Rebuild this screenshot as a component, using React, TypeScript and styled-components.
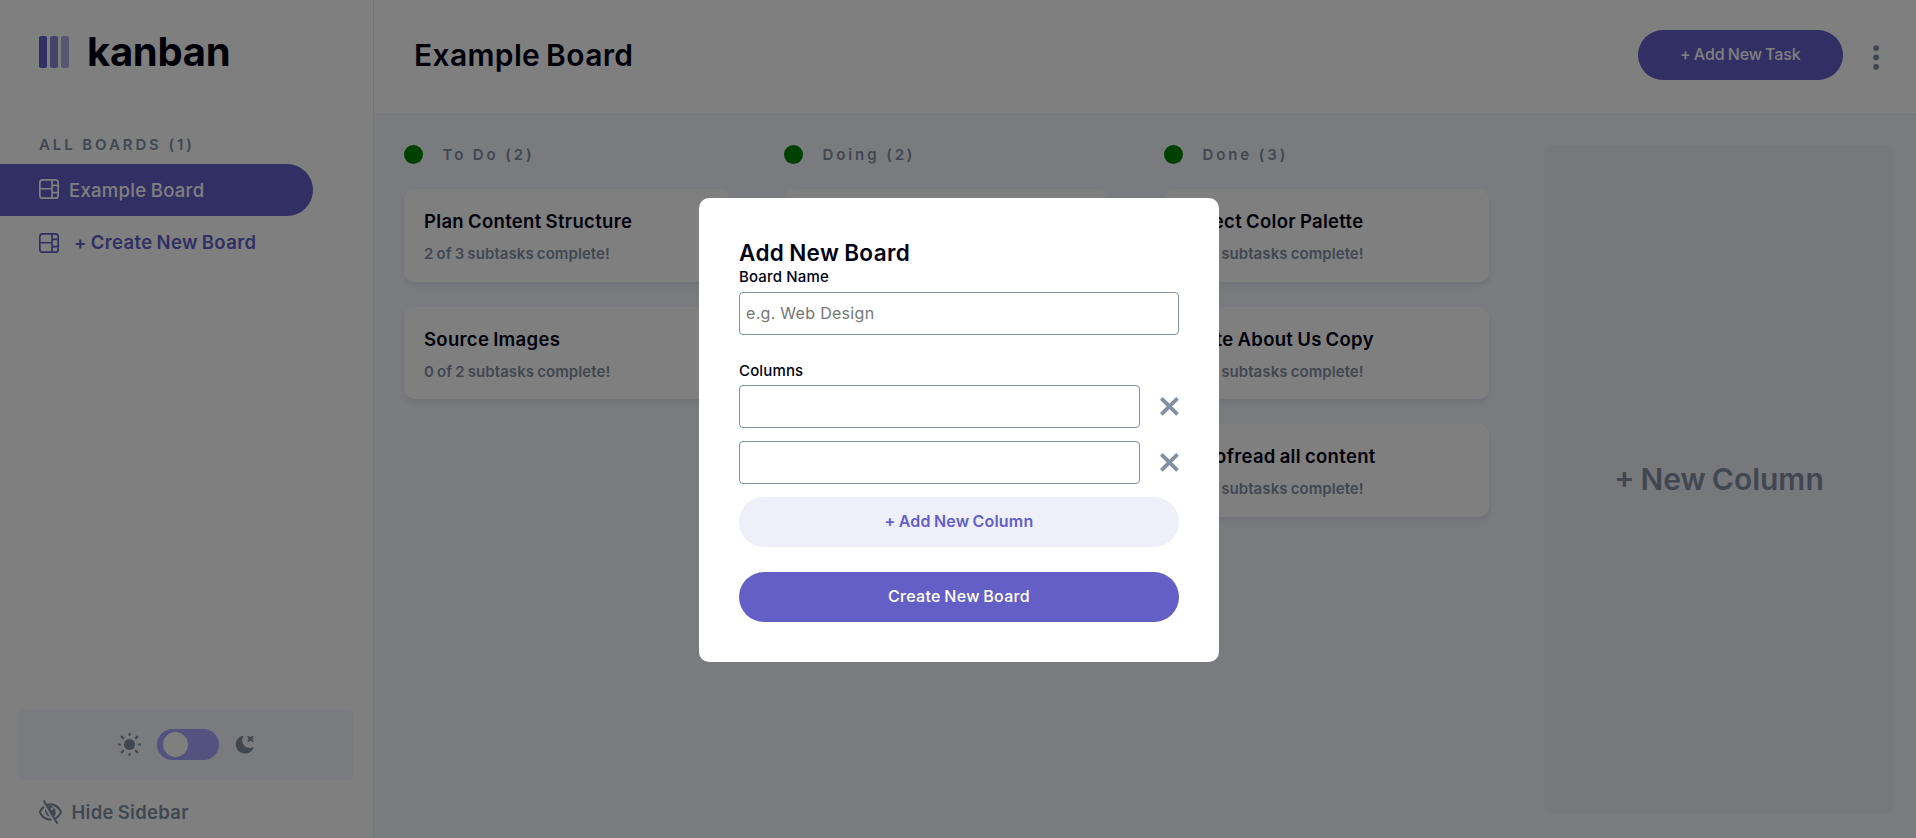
import React from 'react';
import styled, { createGlobalStyle } from 'styled-components';

const colors = {
  purple: '#635fc7',
  purpleLight: '#a8a4ff',
  grey: '#828fa3',
  line: '#e4ebfa',
  surface: '#f4f7fd',
  ink: '#000112',
};

const GlobalStyle = createGlobalStyle`
  *, *::before, *::after { box-sizing: border-box; }
  body {
    margin: 0;
    overflow: hidden;
    font-family: Inter, "Liberation Sans", sans-serif;
    color: ${colors.ink};
  }
  h1, h2, h3, p { margin: 0; }
  button, input { font-family: inherit; }
  button { border: 0; padding: 0; cursor: pointer; background: none; }
  svg { display: block; flex: none; }
`;

const Page = styled.div`
  display: flex;
  height: 100vh;
  background: ${colors.surface};
`;

/* Sidebar */

const Sidebar = styled.aside`
  display: flex;
  flex-direction: column;
  flex: none;
  width: 374px;
  padding: 36px 0 10px;
  background: #fff;
  border-right: 1px solid ${colors.line};
`;

const Logo = styled.div`
  display: flex;
  gap: 18px;
  height: 32px;
  margin-left: 39px;
  font-size: 40px;
  font-weight: 700;
  line-height: 32px;
  letter-spacing: -0.3px;
`;

const LogoBars = styled.div`
  display: flex;
  gap: 3px;
`;

const LogoBar = styled.span<{ $opacity: number }>`
  width: 8px;
  height: 32px;
  border-radius: 2px;
  background: ${colors.purple};
  opacity: ${(p) => p.$opacity};
`;

const BoardsHeading = styled.h3`
  margin: 66px 0 9px 39px;
  font-size: 15px;
  font-weight: 600;
  line-height: 21px;
  letter-spacing: 2.9px;
  color: ${colors.grey};
`;

const BoardLink = styled.button<{ $active?: boolean }>`
  display: flex;
  align-items: center;
  gap: ${(p) => (p.$active ? 10 : 15)}px;
  width: 337px;
  height: 52px;
  margin-left: -24px;
  padding-left: 63px;
  border-radius: 26px;
  background: ${(p) => (p.$active ? colors.purple : 'transparent')};
  color: ${(p) => (p.$active ? '#fff' : colors.purple)};
  font-size: 18.5px;
  font-weight: ${(p) => (p.$active ? 500 : 600)};
  letter-spacing: ${(p) => (p.$active ? 0.3 : 0.35)}px;
  word-spacing: -1px;

  svg {
    margin-top: ${(p) => (p.$active ? 0 : 2)}px;
    margin-bottom: ${(p) => (p.$active ? 2 : 0)}px;
  }
`;

const ThemePanel = styled.div`
  display: flex;
  align-items: center;
  justify-content: center;
  gap: 16px;
  height: 71px;
  margin: auto 20px 16px 19px;
  border-radius: 5px;
  background: ${colors.surface};
  color: ${colors.grey};
`;

const Toggle = styled.button`
  display: flex;
  align-items: center;
  width: 62px;
  height: 31px;
  padding-left: 6px;
  border-radius: 16px;
  background: ${colors.purpleLight};
`;

const Knob = styled.span`
  width: 25px;
  height: 25px;
  border-radius: 50%;
  background: #fff;
`;

const HideButton = styled.button`
  display: flex;
  align-items: center;
  gap: 9.5px;
  height: 32px;
  margin-left: 39px;
  font-size: 18.5px;
  font-weight: 600;
  letter-spacing: 0.3px;
  word-spacing: -1px;
  color: ${colors.grey};
`;

/* Main area */

const Main = styled.main`
  display: flex;
  flex-direction: column;
  flex: 1;
  min-width: 0;
`;

const Header = styled.header`
  display: flex;
  align-items: flex-start;
  height: 115px;
  padding: 30px 37px 0 40px;
  background: #fff;
  border-bottom: 1px solid ${colors.line};
`;

const BoardTitle = styled.h1`
  flex: 1;
  font-size: 30px;
  font-weight: 600;
  line-height: 50px;
  letter-spacing: 0.35px;
  word-spacing: -2px;
`;

const Pill = styled.button<{ $secondary?: boolean }>`
  height: 50px;
  padding-bottom: 2px;
  border-radius: 25px;
  font-size: 16px;
  font-weight: ${(p) => (p.$secondary ? 600 : 500)};
  letter-spacing: ${(p) => (p.$secondary ? 0.2 : 0)}px;
  word-spacing: -1px;
  background: ${(p) => (p.$secondary ? '#efeff9' : colors.purple)};
  color: ${(p) => (p.$secondary ? colors.purple : '#fff')};
`;

const AddTaskButton = styled(Pill)`
  width: 205px;
  margin-right: 30px;
  letter-spacing: -0.1px;
`;

const MenuButton = styled.button`
  margin-top: 15px;
  color: ${colors.grey};
`;

const Columns = styled.div`
  display: flex;
  flex: 1;
  gap: 55px;
  padding: 30px 22px 25px 30px;
`;

const Column = styled.section`
  display: flex;
  flex-direction: column;
  gap: 25px;
  flex: none;
  width: 325px;
`;

const ColumnHeading = styled.h3`
  display: flex;
  align-items: center;
  gap: 19.5px;
  height: 19px;
  font-size: 15px;
  font-weight: 600;
  letter-spacing: 2.9px;
  color: ${colors.grey};
`;

const Dot = styled.span`
  width: 19px;
  height: 19px;
  border-radius: 50%;
  background: green;
`;

const Card = styled.article`
  height: 92.5px;
  padding: 20px;
  border-radius: 10px;
  background: #fff;
  box-shadow: 0 4px 6px rgba(54, 78, 126, 0.1);
`;

const CardTitle = styled.h2`
  font-size: 18.5px;
  font-weight: 600;
  line-height: 24px;
  letter-spacing: 0.32px;
  word-spacing: -1px;
`;

const CardMeta = styled.p`
  margin-top: 12px;
  font-size: 15px;
  font-weight: 600;
  line-height: 18px;
  letter-spacing: 0.08px;
  word-spacing: -0.8px;
  color: ${colors.grey};
`;

const NewColumn = styled.button`
  flex: none;
  width: 350px;
  border-radius: 8px;
  background: linear-gradient(180deg, #edf0f8 0%, #eff1f7 100%);
  color: ${colors.grey};
  font-size: 30px;
  font-weight: 600;
  letter-spacing: 0;
  word-spacing: -1.5px;
`;

/* Dialog */

const Overlay = styled.div`
  position: fixed;
  inset: 0;
  display: flex;
  align-items: center;
  justify-content: center;
  padding: 22px 0 0 2px;
  background: rgba(0, 0, 0, 0.5);
`;

const Dialog = styled.form`
  display: flex;
  flex-direction: column;
  width: 520px;
  padding: 40px;
  border-radius: 10px;
  background: #fff;
`;

const DialogTitle = styled.h2`
  font-size: 22.5px;
  font-weight: 600;
  line-height: 29px;
  letter-spacing: 0.35px;
  word-spacing: -1px;
`;

const Label = styled.label`
  margin-bottom: 6px;
  font-size: 15px;
  font-weight: 500;
  line-height: 19px;
  letter-spacing: 0.15px;
`;

const ColumnsLabel = styled(Label)`
  margin: 26px 0 5px;
`;

const Input = styled.input`
  flex: 1;
  min-width: 0;
  height: 43px;
  padding: 0 6px 2px;
  border: 1px solid ${colors.grey};
  border-radius: 4px;
  outline: 0;
  background: #fff;
  font-size: 16px;
  letter-spacing: 0.3px;

  &::placeholder { color: #757575; }
`;

const Field = styled.div`
  display: flex;
  align-items: center;
  gap: 20px;
`;

const ColumnFields = styled.div`
  display: flex;
  flex-direction: column;
  gap: 13px;
  margin-bottom: 13px;
`;

const RemoveButton = styled.button`
  color: ${colors.grey};
`;

const SubmitButton = styled(Pill)`
  margin-top: 25px;
  letter-spacing: 0.3px;
`;

/* Icons */

const BoardIcon = () => (
  <svg width="20" height="20" viewBox="0 0 16 16" fill="currentColor">
    <path d="M0 2.889A2.889 2.889 0 0 1 2.889 0H13.11A2.889 2.889 0 0 1 16 2.889V13.11A2.888 2.888 0 0 1 13.111 16H2.89A2.889 2.889 0 0 1 0 13.111V2.89Zm1.333 5.555v4.667c0 .859.697 1.556 1.556 1.556h6.889V8.444H1.333Zm8.445-1.333V1.333h-6.89A1.556 1.556 0 0 0 1.334 2.89V7.11h8.445Zm4.889-1.333H11.11v4.444h3.556V5.778Zm0 5.778H11.11v3.11h2a1.556 1.556 0 0 0 1.556-1.555v-1.555Zm0-7.112V2.89a1.555 1.555 0 0 0-1.556-1.556h-2v3.111h3.556Z" />
  </svg>
);

const SunIcon = () => (
  <svg width="23" height="23" viewBox="0 0 23 23" fill="currentColor">
    <circle cx="11.5" cy="11.5" r="5.5" />
    {[0, 45, 90, 135, 180, 225, 270, 315].map((angle) => (
      <rect
        key={angle}
        x="10.4"
        y={angle % 90 ? -0.6 : 0}
        width="2.2"
        height={angle % 90 ? 4 : 3}
        rx="0.9"
        transform={`rotate(${angle} 11.5 11.5)`}
      />
    ))}
  </svg>
);

const MoonIcon = () => (
  <svg width="19" height="19" viewBox="0 0 16 16" fill="currentColor">
    <path d="M6.474.682c.434-.11.718.406.481.78A6.067 6.067 0 0 0 6.01 4.72c0 3.418 2.827 6.187 6.314 6.187.89.002 1.77-.182 2.584-.54.408-.18.894.165.724.57-1.16 2.775-3.944 4.73-7.194 4.73-4.292 0-7.771-3.41-7.771-7.615 0-3.541 2.466-6.518 5.807-7.37Zm8.433.07c.442-.294.969.232.674.674l-.525.787a1.943 1.943 0 0 0 0 2.157l.525.788c.295.441-.232.968-.674.673l-.787-.525a1.943 1.943 0 0 0-2.157 0l-.786.525c-.442.295-.97-.232-.675-.673l.525-.788a1.943 1.943 0 0 0 0-2.157l-.525-.787c-.295-.442.232-.968.674-.673l.787.525a1.943 1.943 0 0 0 2.157 0Z" />
  </svg>
);

const HideIcon = () => (
  <svg width="23" height="24" viewBox="0 0 18 16" preserveAspectRatio="none" fill="currentColor" fillRule="evenodd">
    <path d="M8.522 11.223a4.252 4.252 0 0 1-3.654-5.22l3.654 5.22ZM9 12.25A8.685 8.685 0 0 1 1.5 8a8.612 8.612 0 0 1 2.76-2.864l-.86-1.23A10.112 10.112 0 0 0 .208 7.238a1.5 1.5 0 0 0 0 1.524A10.187 10.187 0 0 0 9 13.75c.414 0 .828-.025 1.239-.074l-1-1.43A8.88 8.88 0 0 1 9 12.25Zm8.792-3.488a10.14 10.14 0 0 1-4.486 4.046l1.504 2.148a.375.375 0 0 1-.092.523l-.648.453a.375.375 0 0 1-.523-.092L3.19 1.044A.375.375 0 0 1 3.282.52L3.93.068a.375.375 0 0 1 .523.092l1.708 2.438A10.136 10.136 0 0 1 9 2.25a10.187 10.187 0 0 1 8.792 4.988 1.5 1.5 0 0 1 0 1.524ZM16.5 8A8.674 8.674 0 0 0 7.07 3.96l.2.29A4.25 4.25 0 0 1 11.9 11.1l.54.76A8.7 8.7 0 0 0 16.5 8ZM10.1 4.9a1 1 0 1 0 0 2 1 1 0 0 0 0-2Z" />
  </svg>
);

const MenuIcon = () => (
  <svg width="6.2" height="25" viewBox="0 0 5 20" fill="currentColor">
    <circle cx="2.5" cy="2.4" r="2.4" />
    <circle cx="2.5" cy="10" r="2.4" />
    <circle cx="2.5" cy="17.6" r="2.4" />
  </svg>
);

const CrossIcon = () => (
  <svg width="19" height="19" viewBox="0 0 15 15" fill="currentColor">
    <path d="m12.728 0 2.122 2.122L2.122 14.85 0 12.728z" />
    <path d="M0 2.122 2.122 0 14.85 12.728l-2.122 2.122z" />
  </svg>
);

type Task = { title: string; done: number; total: number };

const columns: { name: string; tasks: Task[] }[] = [
  {
    name: 'To Do',
    tasks: [
      { title: 'Plan Content Structure', done: 2, total: 3 },
      { title: 'Source Images', done: 0, total: 2 },
    ],
  },
  {
    name: 'Doing',
    tasks: [
      { title: 'Design Home Page', done: 1, total: 3 },
      { title: 'Build Navigation', done: 0, total: 2 },
    ],
  },
  {
    name: 'Done',
    tasks: [
      { title: 'Select Color Palette', done: 1, total: 1 },
      { title: 'Write About Us Copy', done: 1, total: 1 },
      { title: 'Proofread all content', done: 1, total: 1 },
    ],
  },
];

export default function App() {
  return (
    <>
      <GlobalStyle />
      <Page>
        <Sidebar>
          <Logo>
            <LogoBars>
              <LogoBar $opacity={1} />
              <LogoBar $opacity={0.75} />
              <LogoBar $opacity={0.5} />
            </LogoBars>
            kanban
          </Logo>
          <BoardsHeading>ALL BOARDS (1)</BoardsHeading>
          <BoardLink $active>
            <BoardIcon />
            Example Board
          </BoardLink>
          <BoardLink>
            <BoardIcon />+ Create New Board
          </BoardLink>
          <ThemePanel>
            <SunIcon />
            <Toggle aria-label="Toggle theme">
              <Knob />
            </Toggle>
            <MoonIcon />
          </ThemePanel>
          <HideButton>
            <HideIcon />
            Hide Sidebar
          </HideButton>
        </Sidebar>
        <Main>
          <Header>
            <BoardTitle>Example Board</BoardTitle>
            <AddTaskButton>+ Add New Task</AddTaskButton>
            <MenuButton aria-label="Board menu">
              <MenuIcon />
            </MenuButton>
          </Header>
          <Columns>
            {columns.map((column) => (
              <Column key={column.name}>
                <ColumnHeading>
                  <Dot />
                  {`${column.name} (${column.tasks.length})`}
                </ColumnHeading>
                {column.tasks.map((task) => (
                  <Card key={task.title}>
                    <CardTitle>{task.title}</CardTitle>
                    <CardMeta>{`${task.done} of ${task.total} subtasks complete!`}</CardMeta>
                  </Card>
                ))}
              </Column>
            ))}
            <NewColumn>+ New Column</NewColumn>
          </Columns>
        </Main>
      </Page>
      <Overlay>
        <Dialog onSubmit={(event) => event.preventDefault()}>
          <DialogTitle>Add New Board</DialogTitle>
          <Label htmlFor="board-name">Board Name</Label>
          <Field>
            <Input id="board-name" placeholder="e.g. Web Design" />
          </Field>
          <ColumnsLabel as="span">Columns</ColumnsLabel>
          <ColumnFields>
            {[1, 2].map((n) => (
              <Field key={n}>
                <Input aria-label={`Column ${n}`} />
                <RemoveButton type="button" aria-label="Remove column">
                  <CrossIcon />
                </RemoveButton>
              </Field>
            ))}
          </ColumnFields>
          <Pill type="button" $secondary>
            + Add New Column
          </Pill>
          <SubmitButton type="submit">Create New Board</SubmitButton>
        </Dialog>
      </Overlay>
    </>
  );
}
